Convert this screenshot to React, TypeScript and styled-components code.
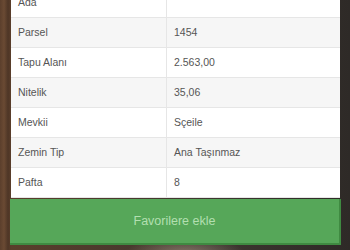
import styled, { createGlobalStyle } from "styled-components";

const rows: [string, string][] = [
  ["Ada", ""],
  ["Parsel", "1454"],
  ["Tapu Alanı", "2.563,00"],
  ["Nitelik", "35,06"],
  ["Mevkii", "Sçeile"],
  ["Zemin Tip", "Ana Taşınmaz"],
  ["Pafta", "8"],
];

export default function App() {
  return (
    <>
      <GlobalStyle />
      <Screen>
        <Panel>
          <Table>
            <tbody>
              {rows.map(([label, value], i) => (
                <Row key={label} $striped={i % 2 === 1}>
                  <Label>{label}</Label>
                  <Value>{value}</Value>
                </Row>
              ))}
            </tbody>
          </Table>
          <FavButton>Favorilere ekle</FavButton>
        </Panel>
      </Screen>
    </>
  );
}

const GlobalStyle = createGlobalStyle`
  html, body {
    margin: 0;
    padding: 0;
    width: 350px;
    height: 250px;
    overflow: hidden;
  }
  body {
    font-family: "Liberation Sans", Arial, sans-serif;
  }
`;

const Screen = styled.div`
  width: 350px;
  height: 250px;
  overflow: hidden;
  background:
    radial-gradient(ellipse 60px 18px at 185px 254px, rgba(190, 170, 150, 0.55), transparent),
    linear-gradient(
      90deg,
      #5b3f2c 0px,
      #6a4a33 4px,
      #4e3626 8px,
      #5a3e2b 11px,
      #3e3630 60%,
      #2e2a27 100%
    );
`;

const Panel = styled.div`
  display: flex;
  flex-direction: column;
  width: 331px;
  margin: -13px 0 0 10px;
`;

const Table = styled.table`
  width: 329px;
  margin-left: 1px;
  border-collapse: collapse;
  background: #fff;
  table-layout: fixed;
`;

const Row = styled.tr<{ $striped: boolean }>`
  height: 30px;
  background: ${(p) => (p.$striped ? "#f6f6f6" : "#ffffff")};
  border-bottom: 1px solid #e6e6e6;
`;

const Label = styled.td`
  width: 148px;
  padding: 0 0 0 7px;
  font-size: 10.5px;
  color: #555555;
  border-right: 1px solid #e6e6e6;
`;

const Value = styled.td`
  padding: 0 0 0 7px;
  font-size: 10.5px;
  color: #555555;
`;

const FavButton = styled.button`
  height: 46px;
  margin-top: 1px;
  border: none;
  border-right: 2px solid #3f8a41;
  border-bottom: 2px solid #3f8a41;
  background: #56a759;
  color: #b2dfb0;
  font-family: "Liberation Sans", Arial, sans-serif;
  font-size: 12.5px;
  padding: 0;
`;
